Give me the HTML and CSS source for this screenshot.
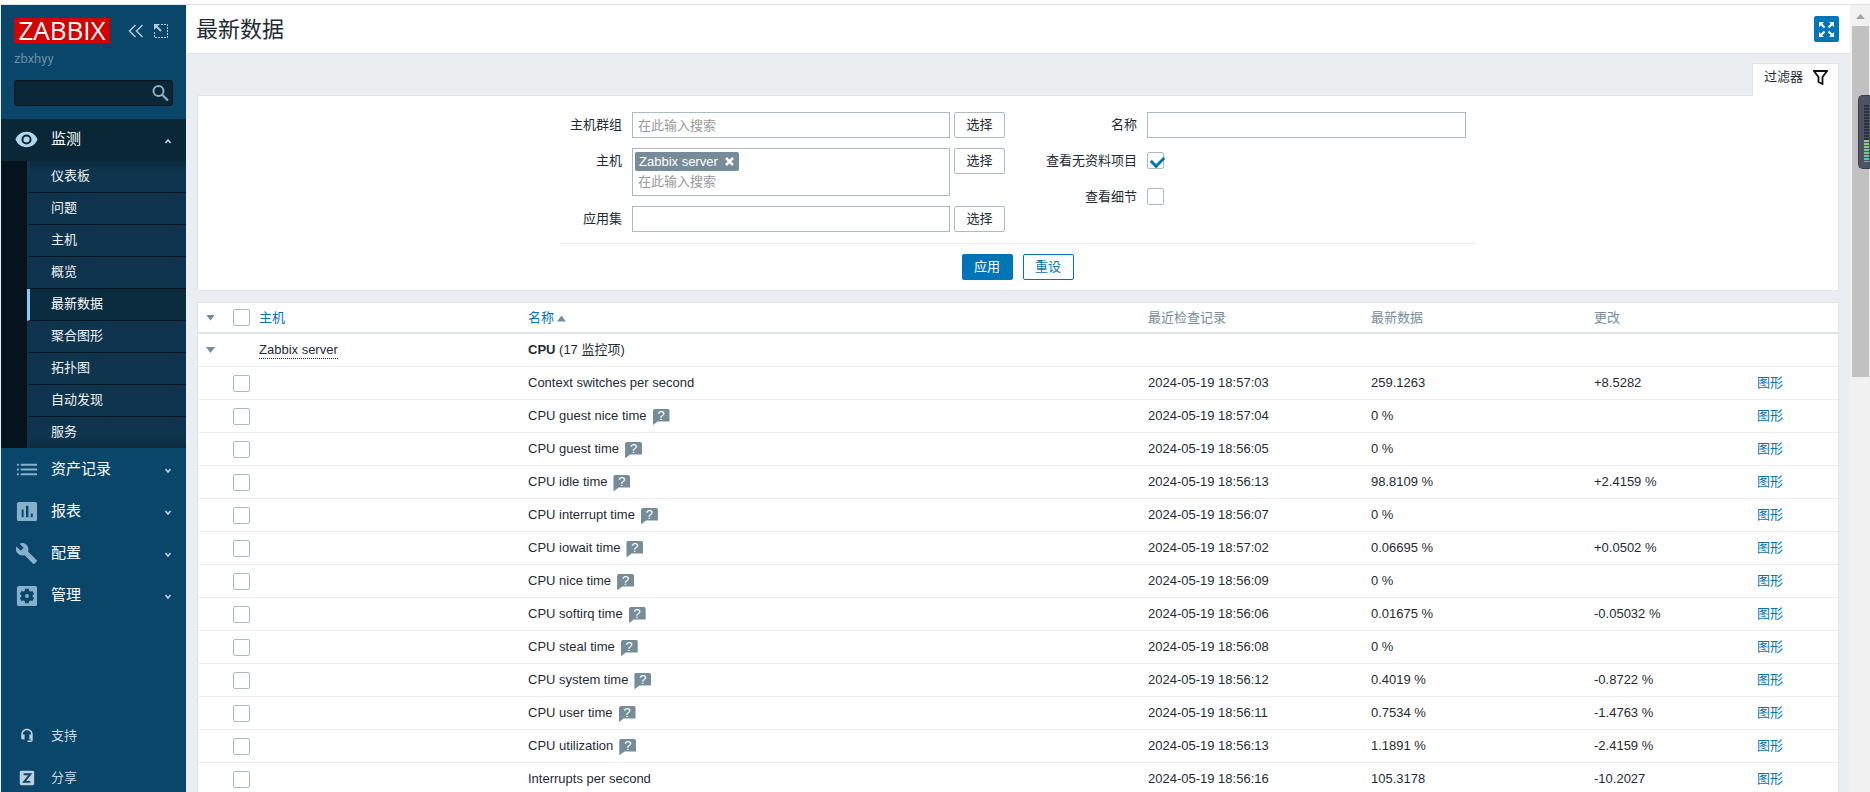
FILE: index.html
```html
<!DOCTYPE html>
<html lang="zh-CN">
<head>
<meta charset="utf-8">
<title>最新数据</title>
<link rel="stylesheet" href="styles.css">
</head>
<body>
<div class="app">
  <aside class="sidebar">
    <div class="brand">
      <a class="logo" href="#">ZABBIX</a>
      <button class="icon-button" type="button" aria-label="折叠"><svg width="16" height="14" viewBox="0 0 16 14" fill="none" stroke="#b4c9d5" stroke-width="1.5"><path d="M7.5 1 1.5 7l6 6M14.5 1l-6 6 6 6"/></svg></button>
      <button class="icon-button" type="button" aria-label="隐藏"><svg width="14" height="14" viewBox="0 0 14 14" fill="none" stroke="#b4c9d5"><path d="M7 .5h6.500v13H.5V7" stroke-dasharray="2 1"/><path d="M2 2l5 5" stroke-width="2"/><path d="M0 0h6L0 6z" fill="#b4c9d5" stroke="none"/></svg></button>
    </div>
    <div class="server-name">zbxhyy</div>
    <form class="search" role="search">
      <input type="text" aria-label="搜索">
      <button class="icon-button" type="button" aria-label="搜索"><svg width="18" height="18" viewBox="0 0 18 18" fill="none" stroke="#8fb0c4"><circle cx="7.500" cy="7" r="5" stroke-width="2"/><path d="m11 10.500 6 6" stroke-width="2.200"/></svg></button>
    </form>
    <nav class="menu">
      <a class="menu-item open" href="#"><svg class="menu-icon" viewBox="0 0 24 24" fill="#b3d6ec"><path d="M12 4C6.500 4 2.300 7.300.500 12c1.800 4.700 6 8 11.500 8s9.700-3.300 11.500-8C21.700 7.300 17.500 4 12 4zm0 13.300a5.300 5.300 0 1 1 0-10.600 5.300 5.300 0 0 1 0 10.600zm0-8.500a3.200 3.200 0 1 0 0 6.400 3.200 3.200 0 0 0 0-6.400z"/></svg><span>监测</span><svg class="chevron" viewBox="0 0 8 6"><path d="M1.500 5 4 2l2.500 3"/></svg></a>
      <div class="submenu">
        <a href="#">仪表板</a>
        <a href="#">问题</a>
        <a href="#">主机</a>
        <a href="#">概览</a>
        <a class="active" href="#">最新数据</a>
        <a href="#">聚合图形</a>
        <a href="#">拓扑图</a>
        <a href="#">自动发现</a>
        <a href="#">服务</a>
      </div>
      <a class="menu-item" href="#"><svg class="menu-icon" viewBox="0 0 24 24" fill="#87b0ca"><path d="M2 6h2v2H2zm4 0h17v2H6zM2 11h2v2H2zm4 0h17v2H6zM2 16h2v2H2zm4 0h17v2H6z"/></svg><span>资产记录</span><svg class="chevron" viewBox="0 0 8 6"><path d="M1.500 1 4 4l2.500-3"/></svg></a>
      <a class="menu-item" href="#"><svg class="menu-icon" viewBox="0 0 24 24" fill="#87b0ca"><path fill-rule="evenodd" d="M4 2h17a2 2 0 0 1 2 2v16a2 2 0 0 1-2 2H4a2 2 0 0 1-2-2V4c0-1 1-2 2-2zm3 8v8h2v-8zm4.500-4v12h2.500V6zm5 8v4h2v-4z"/></svg><span>报表</span><svg class="chevron" viewBox="0 0 8 6"><path d="M1.500 1 4 4l2.500-3"/></svg></a>
      <a class="menu-item" href="#"><svg class="menu-icon" viewBox="0 0 24 24" fill="#87b0ca"><path d="m22.700 19-9.100-9.100c.9-2.300.4-5-1.500-6.900-2-2-5-2.400-7.400-1.300L9 6 6 9 1.600 4.700C.4 7.100.9 10.100 2.900 12.100c1.900 1.900 4.600 2.400 6.900 1.500l9.100 9.100c.4.4 1 .4 1.400 0l2.300-2.300c.5-.4.5-1.100.1-1.400z"/></svg><span>配置</span><svg class="chevron" viewBox="0 0 8 6"><path d="M1.500 1 4 4l2.500-3"/></svg></a>
      <a class="menu-item" href="#"><svg class="menu-icon" viewBox="0 0 24 24"><rect x="2" y="2" width="21" height="21" rx="2" fill="#87b0ca"/><circle cx="12.500" cy="12.500" r="4" fill="none" stroke="#0a466a" stroke-width="4"/><path d="M12.500 5v3M12.500 17v3M6 8.700l2.500 1.500M16.500 14.800l2.500 1.500M6 16.300l2.500-1.500M16.500 10.200 19 8.700" stroke="#0a466a" stroke-width="4"/></svg><span>管理</span><svg class="chevron" viewBox="0 0 8 6"><path d="M1.500 1 4 4l2.500-3"/></svg></a>
    </nav>
    <nav class="menu menu-secondary">
      <a class="menu-item" href="#"><svg class="menu-icon" viewBox="0 0 24 24" fill="#bdd0dc"><path d="M12.500 4C9 4 6.500 6.600 6.500 10v3.500c0 .9.700 1.500 1.500 1.500h2v-5H8.100c0-2.500 2-4.400 4.400-4.400s4.400 1.900 4.400 4.400H15v5h2v1.200h-4v1.500h3.500c1.100 0 2-.9 2-2V10c0-3.400-2.600-6-6-6z"/></svg><span>支持</span></a>
      <a class="menu-item" href="#"><svg class="menu-icon" viewBox="0 0 24 24"><rect x="5" y="4" width="15" height="15" rx="1.500" fill="#bdd0dc"/><path d="M9 7.500h7l-6.500 8H16" fill="none" stroke="#0a466a" stroke-width="2"/></svg><span>分享</span></a>
    </nav>
  </aside>

  <main class="content">
    <header class="page-header">
      <h1>最新数据</h1>
      <button class="fullscreen" type="button" aria-label="全屏"><svg width="17" height="17" viewBox="0 0 17 17" fill="#fff" stroke="#fff" stroke-width="2"><path d="M2 2l4.500 4.500M15 2l-4.500 4.500M2 15l4.500-4.500M15 15l-4.500-4.500"/><path stroke="none" d="M1 1h5L1 6zM16 1h-5l5 5zM1 16h5l-5-5zM16 16h-5l5-5z"/></svg></button>
    </header>

    <div class="page-body">
      <div class="filter-tabs">
        <button class="filter-tab" type="button">过滤器<svg width="15" height="15" viewBox="0 0 15 15" fill="none" stroke="#111" stroke-width="1.800"><path d="M1 1h13L9.500 7v7L5.500 12V7z"/></svg></button>
      </div>
      <form class="filter">
        <div class="filter-columns">
          <div class="filter-grid filter-grid-left">
            <label for="groups">主机群组</label>
            <input class="textbox" id="groups" type="text" placeholder="在此输入搜索">
            <button class="button" type="button">选择</button>

            <label for="hosts">主机</label>
            <div class="multiselect">
              <span class="chip">Zabbix server<button type="button" aria-label="移除"><svg width="9" height="9" viewBox="0 0 9 9" stroke="#fff" stroke-width="2.500"><path d="m1 1 7 7M8 1 1 8"/></svg></button></span>
              <input id="hosts" type="text" placeholder="在此输入搜索">
            </div>
            <button class="button" type="button">选择</button>

            <label for="application">应用集</label>
            <input class="textbox" id="application" type="text">
            <button class="button" type="button">选择</button>
          </div>
          <div class="filter-grid filter-grid-right">
            <label for="name">名称</label>
            <input class="textbox" id="name" type="text">
            <label for="no-data">查看无资料项目</label>
            <div class="check-cell"><input id="no-data" type="checkbox" checked></div>
            <label for="details">查看细节</label>
            <div class="check-cell"><input id="details" type="checkbox"></div>
          </div>
        </div>
        <div class="filter-actions">
          <button class="button primary" type="button">应用</button>
          <button class="button outline" type="button">重设</button>
        </div>
      </form>

      <table class="data">
        <colgroup><col class="c-toggle"><col class="c-check"><col class="c-host"><col class="c-name"><col class="c-last"><col class="c-last"><col class="c-change"><col class="c-graph"></colgroup>
        <thead>
          <tr>
            <th><button class="toggle" type="button" aria-label="全部折叠"></button></th>
            <th><input type="checkbox" aria-label="全选"></th>
            <th><a href="#">主机</a></th>
            <th><a href="#">名称<span class="sort"></span></a></th>
            <th>最近检查记录</th><th>最新数据</th><th>更改</th><th></th>
          </tr>
        </thead>
        <tbody>
          <tr><td><button class="toggle" type="button" aria-label="折叠"></button></td><td></td><td><a class="host" href="#">Zabbix server</a></td><td colspan="5"><b>CPU</b> (17 监控项)</td></tr>
        </tbody>
        <tbody id="items"></tbody>
      </table>
    </div>
  </main>

  <div class="scrollbar"><div class="scroll-arrow"></div><div class="scroll-thumb"></div></div>
  <div class="meter"><div class="meter-idle"></div><div class="meter-level"></div></div>
</div>
<script src="items.js"></script>
</body>
</html>
```
FILE: items.js
```js
const items = [
  ["Context switches per second", false, "18:57:03", "259.1263", "+8.5282"],
  ["CPU guest nice time", true, "18:57:04", "0 %", ""],
  ["CPU guest time", true, "18:56:05", "0 %", ""],
  ["CPU idle time", true, "18:56:13", "98.8109 %", "+2.4159 %"],
  ["CPU interrupt time", true, "18:56:07", "0 %", ""],
  ["CPU iowait time", true, "18:57:02", "0.06695 %", "+0.0502 %"],
  ["CPU nice time", true, "18:56:09", "0 %", ""],
  ["CPU softirq time", true, "18:56:06", "0.01675 %", "-0.05032 %"],
  ["CPU steal time", true, "18:56:08", "0 %", ""],
  ["CPU system time", true, "18:56:12", "0.4019 %", "-0.8722 %"],
  ["CPU user time", true, "18:56:11", "0.7534 %", "-1.4763 %"],
  ["CPU utilization", true, "18:56:13", "1.1891 %", "-2.4159 %"],
  ["Interrupts per second", false, "18:56:16", "105.3178", "-10.2027"]
];
const help = '<button class="help" type="button" aria-label="说明">?</button>';
document.getElementById("items").innerHTML = items.map(([name, hasHelp, time, value, change]) =>
  `<tr><td></td><td><input type="checkbox" aria-label="${name}"></td><td></td><td>${name}${hasHelp ? help : ""}</td>` +
  `<td>2024-05-19 ${time}</td><td>${value}</td><td>${change}</td><td><a href="#">图形</a></td></tr>`
).join("");
```
FILE: styles.css
```css
* { box-sizing: border-box; }
html, body { height: 100%; margin: 0; }
body {
  overflow: hidden;
  background: #fff;
  color: #1f2c33;
  font: 13px/18px "Liberation Sans", Arial, "Noto Sans CJK SC", sans-serif;
}
button, input { font: inherit; color: inherit; }
button { cursor: pointer; }
a { color: #0275b8; text-decoration: none; }

.app {
  position: relative;
  display: flex;
  height: calc(100vh - 4px);
  margin-top: 4px;
  padding-left: 1px;
  border-top: 1px solid #dfe4e7;
  background: #ebeef0;
  overflow: hidden;
}

/* Sidebar */
.sidebar { display: flex; flex-direction: column; flex: none; width: 185px; background: #0a466a; }
.brand { display: flex; align-items: center; padding: 13px 16px 0 13px; }
.logo {
  width: 96px;
  margin-right: 18px;
  background: #d40000;
  color: #fff;
  font: 26px/25px "Open Sans", "Noto Sans", sans-serif;
  text-align: center;
}
.icon-button { display: flex; padding: 0; border: 0; background: none; }
.brand .icon-button + .icon-button { margin-left: 10px; }
.server-name { padding: 7px 13px 12px; color: #6d8fa5; font-family: Roboto, sans-serif; font-size: 13px; }
.search { display: flex; align-items: center; height: 26px; margin: 0 13px 13px; padding-right: 3px; border: 1px solid #04131c; border-radius: 3px; background: #0a2738; }
.search input { flex: 1; min-width: 0; padding: 0 6px; border: 0; outline: 0; background: none; color: #fff; }
.menu-item { display: flex; align-items: center; height: 42px; padding: 0 13px; color: #fff; font-size: 15px; }
.menu-item.open { background: #0a2737; padding-bottom: 2px; }
.menu-icon { width: 23px; height: 23px; margin-left: 1px; margin-right: 13px; }
.chevron { width: 8px; height: 6px; margin: 4px 1px 0 auto; fill: none; stroke: #c5d5df; stroke-width: 1.5; }
.submenu { padding-left: 26px; background: #04131c; }
.submenu a { display: block; height: 32px; padding: 6px 0 0 21px; border-left: 3px solid #0f344d; border-bottom: 1px solid #04131c; background: #0f344d; color: #eef3f6; }
.submenu a.active { border-left-color: #80cfff; background: #0b2c3f; color: #fff; }
.submenu a:first-child { background: linear-gradient(#0b2a3d, #0f344d 10px); }
.submenu a:last-child { height: 31px; border-bottom: 0; background: linear-gradient(#0f344d 20px, #0b2a3d); }
.menu-secondary { margin-top: auto; margin-bottom: -7px; }
.menu-secondary .menu-item { color: #c9d8e1; font-size: 13px; }

/* Page header */
.content { flex: 1; min-width: 0; }
.page-header { display: flex; align-items: center; justify-content: space-between; height: 49px; padding: 0 11px 0 10px; border-bottom: 1px solid #dfe4e7; background: #fff; }
.page-header h1 { margin: 0; padding-top: 2px; font-size: 22px; line-height: 28px; font-weight: 400; }
.fullscreen { display: flex; align-items: center; justify-content: center; width: 25px; height: 26px; padding: 0; border: 0; border-radius: 2px; background: #0275b8; }
.page-body { padding: 9px 11px 0; }

/* Filter */
.filter-tabs { display: flex; justify-content: flex-end; }
.filter-tab { display: flex; align-items: center; gap: 10px; height: 33px; margin-bottom: -1px; padding: 0 10px 6px 11px; border: 1px solid #dfe4e7; border-bottom: 0; background: #fff; z-index: 1; }
.filter { padding: 16px 11px 10px 10px; border: 1px solid #dfe4e7; background: #fff; }
.filter-columns { display: flex; width: 917px; margin: 0 auto; padding: 0 10px 11px 0; border-bottom: 1px solid #ebeef0; }
.filter-grid { display: grid; row-gap: 10px; align-items: start; }
.filter-grid > label { padding-top: 4px; text-align: right; white-space: nowrap; }
.filter-grid-left { grid-template-columns: 69px 318px 51px; column-gap: 4px; }
.filter-grid-left > label { margin-right: 6px; }
.filter-grid-right { flex: 1; grid-template-columns: 1fr 319px; grid-auto-rows: 26px; column-gap: 10px; align-content: start; }
.textbox { width: 100%; height: 26px; padding: 0 5px; border: 1px solid #acbbc2; background: #fff; }
.textbox:focus { outline: 0; }
::placeholder { color: #9a9a9a; opacity: 1; }
.multiselect { height: 48px; padding: 3px 2px 0; border: 1px solid #acbbc2; }
.multiselect input { display: block; width: 100%; height: 20px; padding: 0 3px; border: 0; outline: 0; background: none; }
.chip { display: flex; align-items: center; width: max-content; height: 19px; padding: 0 5px 0 4px; border-radius: 2px; background: #768d99; color: #fff; }
.chip button { display: flex; margin-left: 7px; padding: 0; border: 0; background: none; }
.button { height: 26px; width: 51px; padding: 0; border: 1px solid #acbbc2; border-radius: 2px; background: #fff; }
.primary { border-color: #0275b8; background: #0275b8; color: #fff; }
.outline { border-color: #0275b8; color: #0275b8; }
.filter-actions { display: flex; justify-content: center; gap: 10px; padding-top: 10px; }
.check-cell { display: flex; padding-top: 4px; }

input[type="checkbox"] { appearance: none; display: block; width: 17px; height: 17px; margin: 0; border: 1px solid #acbbc2; border-radius: 2px; background: #fff; }
input[type="checkbox"]:checked::after { content: ""; display: block; width: 10px; height: 6px; margin: 3px 0 0 3px; border: solid #0275b8; border-width: 0 0 3px 3px; transform: rotate(-45deg); }

/* Data table */
.data { width: 100%; margin-top: 11px; border: 1px solid #dfe4e7; border-collapse: separate; border-spacing: 0; table-layout: fixed; background: #fff; }
.data th, .data td { height: 33px; padding: 0; border-bottom: 1px solid #ebeef0; text-align: left; font-weight: 400; white-space: nowrap; }
.data th { height: 31px; border-bottom: 2px solid #dfe4e7; color: #768d99; }
.c-toggle { width: 35px; }
.c-check { width: 26px; }
.c-host { width: 269px; }
.c-last { width: 223px; }
.c-change { width: 163px; }
.c-graph { width: 81px; }
.toggle { display: block; width: 9px; height: 6px; margin-left: 8px; padding: 0; border: 0; background: #768d99; clip-path: polygon(0 0, 100% 0, 50% 100%); }
.sort { display: inline-block; width: 9px; height: 6px; margin-left: 3px; background: #768d99; clip-path: polygon(0 100%, 100% 100%, 50% 0); }
.host { display: inline-block; line-height: 16px; border-bottom: 1px dotted #1f2c33; color: #1f2c33; }
.help { width: 17px; height: 17px; margin-left: 6px; padding: 0 0 4px; border: 0; border-radius: 2px; background: #768d99; color: #fff; font-size: 13px; line-height: 13px; vertical-align: baseline; clip-path: polygon(0 0, 100% 0, 100% 76%, 30% 76%, 0 100%); }

/* Scrollbar and floating meter */
.scrollbar { flex: none; width: 20px; padding: 9px 1px 0 2px; background: #f1f1f1; }
.scroll-arrow { width: 9px; height: 5px; margin: 0 auto 7px; background: #a3a3a3; clip-path: polygon(0 100%, 100% 100%, 50% 0); }
.scroll-thumb { height: 351px; background: #c1c1c1; }
.meter { position: absolute; top: 90px; right: 0; width: 12px; height: 74px; padding: 9px 1px 0 5px; border: 1px solid #3b3f4d; border-right: 0; border-radius: 5px 0 0 5px; background: #4e5364; }
.meter-idle { height: 35px; background: repeating-linear-gradient(#2c303b 0 2px, #4e5364 2px 3px); }
.meter-level { height: 22px; background: repeating-linear-gradient(transparent 0 2px, #4e5364 2px 3px), linear-gradient(#9fd068, #4cc9b0); }
```
